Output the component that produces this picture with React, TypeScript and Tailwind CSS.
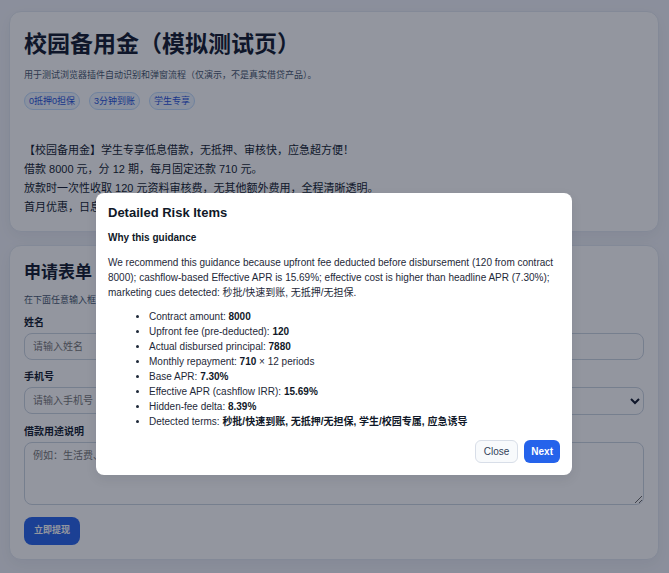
import { useState } from 'react'
import type { ReactNode } from 'react'

const tags = ['0抵押0担保', '3分钟到账', '学生专享']

const promoLines = [
  '【校园备用金】学生专享低息借款，无抵押、审核快，应急超方便！',
  '借款 8000 元，分 12 期，每月固定还款 710 元。',
  '放款时一次性收取 120 元资料审核费，无其他额外费用，全程清晰透明。',
  '首月优惠，日息',
]

const riskItems = [
  { label: 'Contract amount:', value: '8000' },
  { label: 'Upfront fee (pre-deducted):', value: '120' },
  { label: 'Actual disbursed principal:', value: '7880' },
  { label: 'Monthly repayment:', value: '710', suffix: '× 12 periods' },
  { label: 'Base APR:', value: '7.30%' },
  { label: 'Effective APR (cashflow IRR):', value: '15.69%' },
  { label: 'Hidden-fee delta:', value: '8.39%' },
  { label: 'Detected terms:', value: '秒批/快速到账, 无抵押/无担保, 学生/校园专属, 应急诱导' },
]

const control =
  'block w-full rounded-lg border border-[#cbd5e1] bg-white px-2 text-[10px] text-slate-900 placeholder:text-[#757575]'

function Card({ children }: { children: ReactNode }) {
  return (
    <section className="rounded-xl border border-[#e2e8f0] bg-white px-[14px] shadow-[0_5px_16px_rgba(15,23,42,0.05)]">
      {children}
    </section>
  )
}

function Field({ id, label, children }: { id: string; label: string; children: ReactNode }) {
  return (
    <div>
      <label htmlFor={id} className="mb-[3px] block text-[10px] leading-[14px] font-bold">
        {label}
      </label>
      {children}
    </div>
  )
}

function RiskDialog({ onClose }: { onClose: () => void }) {
  return (
    <div className="absolute inset-0 flex items-start justify-center bg-[rgba(15,23,42,0.45)] pt-[193px] pr-[17px] pl-4">
      <div
        role="dialog"
        aria-modal="true"
        aria-labelledby="risk-title"
        className="w-full max-w-[476px] rounded-lg bg-white p-3 text-[10px] leading-[15px] text-gray-800 shadow-[0_4px_12px_rgba(15,23,42,0.08)]"
      >
        <h2 id="risk-title" className="text-[13px] leading-[15px] font-bold text-gray-900">
          Detailed Risk Items
        </h2>
        <h3 className="mt-[10px] font-bold text-gray-900">Why this guidance</h3>
        <p className="mt-[10px]">
          We recommend this guidance because upfront fee deducted before disbursement (120 from contract
          8000); cashflow-based Effective APR is 15.69%; effective cost is higher than headline APR
          (7.30%); marketing cues detected: 秒批/快速到账, 无抵押/无担保.
        </p>
        <ul className="mt-[9px] list-disc pl-[41px]">
          {riskItems.map((item) => (
            <li key={item.label}>
              {item.label} <strong className="text-gray-900">{item.value}</strong> {item.suffix}
            </li>
          ))}
        </ul>
        <div className="mt-[11px] flex justify-end gap-[6px]">
          <button
            type="button"
            onClick={onClose}
            className="h-[23px] rounded-md border border-[#d8dee8] bg-[#f8fafc] px-2 text-slate-700"
          >
            Close
          </button>
          <button
            type="button"
            onClick={onClose}
            className="h-[23px] rounded-md bg-[#2563eb] px-[7px] font-bold text-white"
          >
            Next
          </button>
        </div>
      </div>
    </div>
  )
}

export default function App() {
  const [open, setOpen] = useState(true)

  return (
    <div className="relative min-h-screen bg-[#f1f3f9] pt-[11px] pr-[10px] pb-[14px] pl-[9px] font-['Liberation_Sans','Noto_Sans_CJK_SC',sans-serif] text-slate-900">
      <main className="flex flex-col gap-[13px]">
        <Card>
          <div className="py-[14px]">
            <h1 className="text-[23px] leading-9 font-bold">校园备用金（模拟测试页）</h1>
            <p className="mt-[6px] text-[9px] leading-[14px] text-slate-600">
              用于测试浏览器插件自动识别和弹窗流程（仅演示，不是真实借贷产品）。
            </p>
            <div className="mt-[10px] flex gap-[9px]">
              {tags.map((tag) => (
                <span
                  key={tag}
                  className="rounded-full border border-[#bfdbfe] bg-[#eff6ff] px-1 text-[9px] leading-4 text-[#1d4ed8]"
                >
                  {tag}
                </span>
              ))}
            </div>
            <div className="mt-[31px] text-[11px] leading-[19px]">
              {promoLines.map((line) => (
                <p key={line}>{line}</p>
              ))}
            </div>
          </div>
        </Card>

        <Card>
          <form className="pt-[15px] pb-[14px]" onSubmit={(e) => e.preventDefault()}>
            <h2 className="text-[17px] leading-6 font-bold">申请表单</h2>
            <p className="mt-2 text-[9px] leading-[14px] text-slate-600">在下面任意输入框</p>
            <div className="mt-[9px] grid grid-cols-2 gap-[10px]">
              <Field id="name" label="姓名">
                <input id="name" className={`${control} h-[27px]`} placeholder="请输入姓名" />
              </Field>
              <Field id="school" label="学校">
                <input id="school" className={`${control} h-[27px]`} />
              </Field>
              <Field id="phone" label="手机号">
                <input id="phone" type="tel" className={`${control} h-[27px]`} placeholder="请输入手机号" />
              </Field>
              <Field id="term" label="期数">
                <select id="term" className={`${control} h-7`}>
                  <option>12 期</option>
                </select>
              </Field>
            </div>
            <div className="mt-[10px]">
              <Field id="purpose" label="借款用途说明">
                <textarea
                  id="purpose"
                  className={`${control} h-[63px] py-[5px]`}
                  placeholder="例如：生活费、"
                />
              </Field>
            </div>
            <button
              type="button"
              onClick={() => setOpen(true)}
              className="mt-3 h-7 rounded-lg bg-[#2563eb] px-[10px] text-[9px] font-bold text-white"
            >
              立即提现
            </button>
          </form>
        </Card>
      </main>

      {open && <RiskDialog onClose={() => setOpen(false)} />}
    </div>
  )
}
